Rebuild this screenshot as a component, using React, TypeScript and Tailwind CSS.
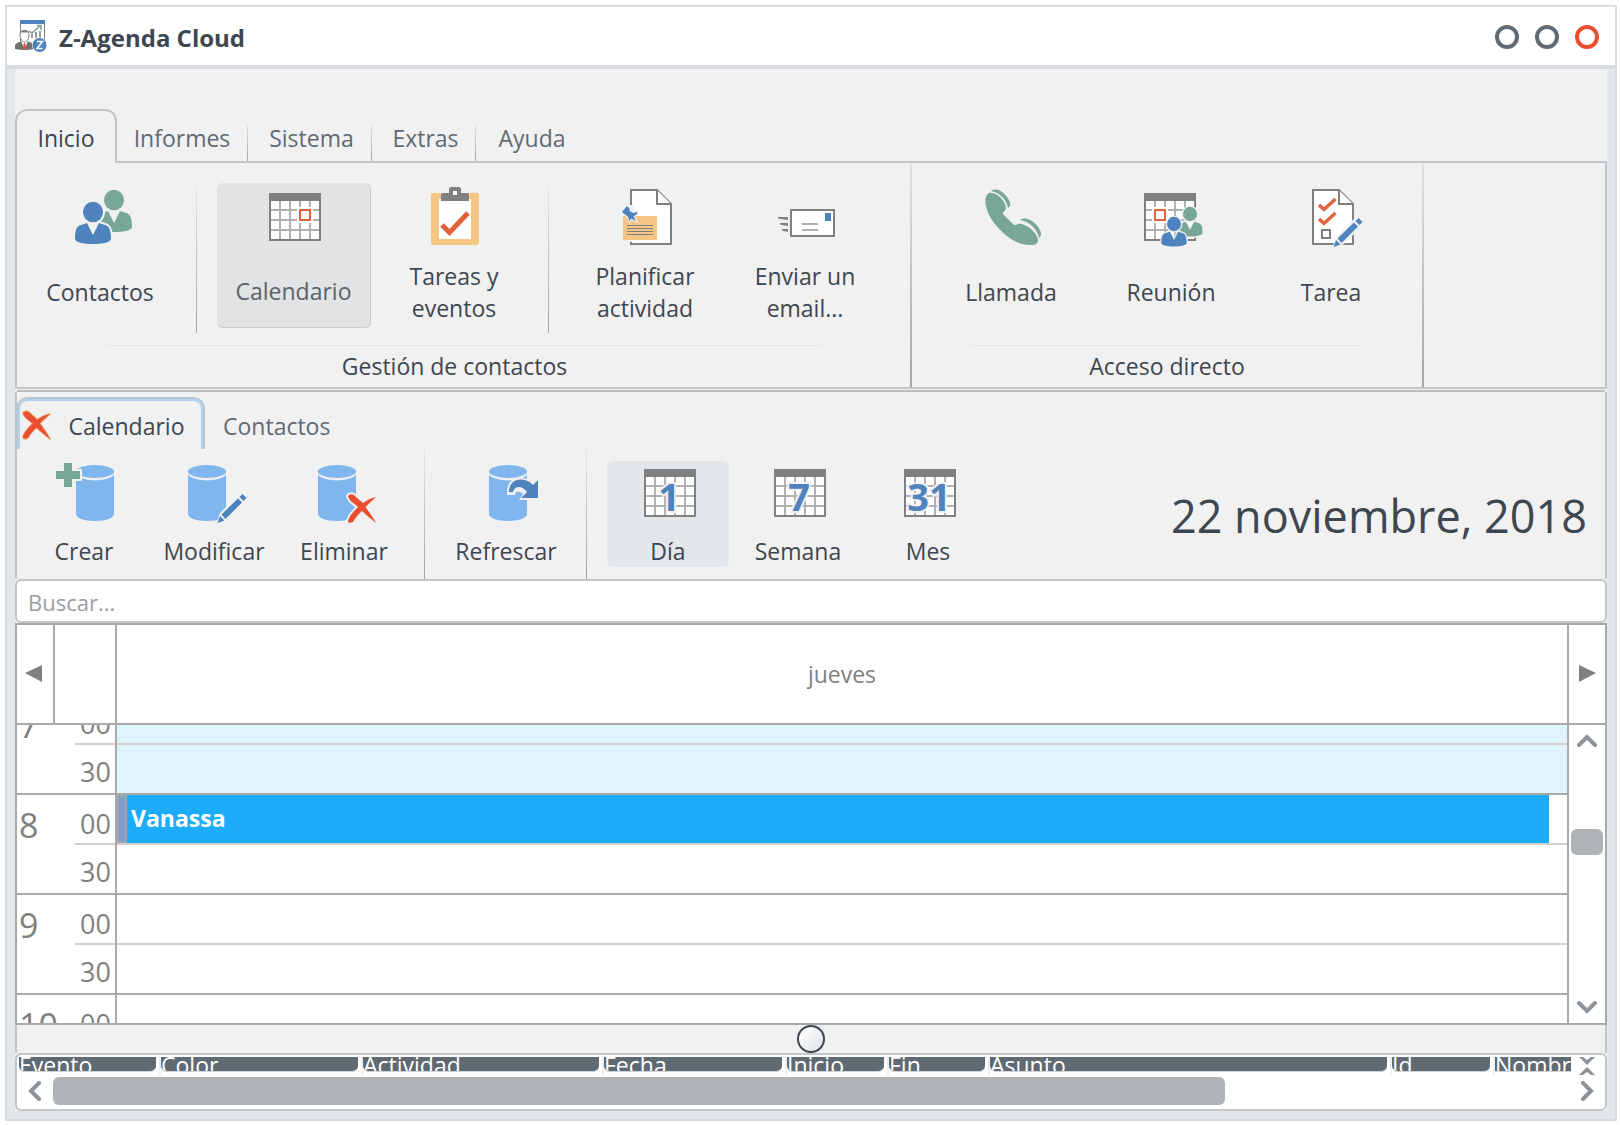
import { ReactNode } from "react";
import clsx from "clsx";

const GRAY = "#808080";
const LIGHT = "#b1b1b1";
const BLUE = "#4e83bd";
const GREEN = "#78a797";
const ORANGE = "#e0633d";
const RED = "#e94e31";
const HALO = "#f1f1f1";

const HORAS = [
  { hora: 7, media: true },
  { hora: 8, media: true },
  { hora: 9, media: true },
  { hora: 10, media: false },
];

const COLUMNAS = [
  { titulo: "Evento", ancho: "w-[142px]" },
  { titulo: "Color", ancho: "w-[202px]" },
  { titulo: "Actividad", ancho: "w-[241px]" },
  { titulo: "Fecha", ancho: "w-[183px]" },
  { titulo: "Inicio", ancho: "w-[102px]" },
  { titulo: "Fin", ancho: "w-[101px]" },
  { titulo: "Asunto", ancho: "w-[402px]" },
  { titulo: "Id", ancho: "w-[103px]" },
  { titulo: "Nombre", ancho: "" },
];

function Svg({ children }: { children: ReactNode }) {
  return (
    <svg viewBox="0 0 64 64" className="w-16 h-16 shrink-0" aria-hidden="true">
      {children}
    </svg>
  );
}

function Rejilla({ x }: { x: number }) {
  return (
    <g transform={`translate(${x} 8)`} shapeRendering="crispEdges">
      <rect width="52" height="48" fill={GRAY} />
      <rect x="2" y="8" width="48" height="38" fill="#fff" />
      <path d="M11 8v38M21 8v38M31 8v38M41 8v38M2 17h48M2 27h48M2 37h48" stroke={LIGHT} strokeWidth="2" />
    </g>
  );
}

function Persona({ x, y, s = 1, color }: { x: number; y: number; s?: number; color: string }) {
  const cuerpo = "M-12 13C-17 14-18 20-18 27c0 3 8 5 18 5s18-2 18-5c0-7-1-13-6-14l-6-2-6 12-6-12z";
  return (
    <g transform={`translate(${x} ${y}) scale(${s})`}>
      <g fill={HALO} stroke={HALO} strokeWidth="4" strokeLinejoin="round">
        <ellipse rx="10" ry="10.3" />
        <path d={cuerpo} />
      </g>
      <g fill={color}>
        <ellipse rx="10" ry="10.3" />
        <path d={cuerpo} />
      </g>
    </g>
  );
}

function Pagina({ x }: { x: number }) {
  return (
    <g transform={`translate(${x} 4)`} fill="#fff" stroke={GRAY} strokeWidth="2">
      <path d="M1 1h26l14 14v40H1z" />
      <path d="M27 1v14h14" />
    </g>
  );
}

function Lapiz() {
  return (
    <g>
      <path d="M33 64l4-12L58 31l8 7-21 21z" fill={HALO} />
      <path d="M34.500 62l2.500-7 4.500 4.500zM38.500 53.500L55 37.500l4 4L42.500 58zM56.500 36l3-3 4 4-3 3z" fill={BLUE} />
    </g>
  );
}

function Cilindro({ x }: { x: number }) {
  return (
    <g transform={`translate(${x} 4)`} fill="#80b6ee">
      <path d="M0 6v43c0 4 8 7 19 7s19-3 19-7V6z" />
      <ellipse cx="19" cy="7" rx="20" ry="8.500" fill={HALO} />
      <ellipse cx="19" cy="6.500" rx="19" ry="6.500" />
    </g>
  );
}

function Numero({ children }: { children: string }) {
  return (
    <Svg>
      <Rejilla x={7} />
      <text x="32" y="50" textAnchor="middle" fill={BLUE} stroke={HALO} strokeWidth="4" paintOrder="stroke" className="text-[38px] font-bold">
        {children}
      </text>
    </Svg>
  );
}

function Aspa({ halo }: { halo?: boolean }) {
  const d = "M0 2C2-1 6 0 8 3L15 9C19 6 23 4 28 3 24 7 20 10 17.500 13 21 18 25 23 28 29 23 25 18 21 14 17 10 21 7 24 5 28 3 29 1 29 0 28 0 23 6 17 10 13 7 10 1 7 0 2z";
  return <path d={d} fill={RED} stroke={halo ? HALO : "#ecc089"} strokeWidth={halo ? 4 : 2} strokeLinejoin="round" paintOrder="stroke" />;
}

const iconos = {
  contactos: (
    <Svg>
      <Persona x={46} y={15} color={GREEN} />
      <Persona x={25} y={27} color={BLUE} />
    </Svg>
  ),
  calendario: (
    <Svg>
      <Rejilla x={7} />
      <rect x="35" y="22" width="16" height="16" fill="#fff" />
      <rect x="38" y="25" width="10" height="10" fill="#fff" stroke={ORANGE} strokeWidth="2" />
    </Svg>
  ),
  tareas: (
    <Svg>
      <rect x="9" y="8" width="48" height="52" rx="2" fill="#f6c685" />
      <path d="M17 14h32v40H17z" fill="#fff" />
      <path d="M19 16V10q0-2 2-2h6V4q0-2 2-2h8q2 0 2 2v4h6q2 0 2 2v6z" fill={GRAY} />
      <path d="M31 6h4v4h-4z" fill="#fff" />
      <path d="M20 40l7.500 7.500L46 28" fill="none" stroke={ORANGE} strokeWidth="5" />
    </Svg>
  ),
  planificar: (
    <Svg>
      <Pagina x={17} />
      <path d="M8 20h13v9h-4v28H8z" fill={HALO} />
      <path d="M17 55h3v2h-3z" fill={HALO} />
      <path d="M10 31h34v24H10z" fill="#f6c685" />
      <path d="M14 40.500h26M14 43.500h26M14 46.500h26M14 49.500h26" stroke={GRAY} strokeWidth="1" />
      <path
        d="M9 27l5-6 2.500 2.500V26l3.500 2 4-1 .5 1.500-4 3 2.500 4.500-5-2.500-1.500 3-1.500-5-3-2z"
        fill={BLUE}
        stroke={HALO}
        strokeWidth="2"
        paintOrder="stroke"
      />
    </Svg>
  ),
  email: (
    <Svg>
      <rect x="18" y="25" width="43" height="26" fill="#fff" stroke={GRAY} strokeWidth="2" />
      <path d="M52 28h6v8h-6z" fill={BLUE} />
      <path d="M29 39h16M29 45h16" stroke={LIGHT} strokeWidth="2" />
      <path d="M5 32h10v3l-10-1.500zM7 38h8v3l-8-1.500zM9 44h6v3l-6-1.500z" fill={GRAY} />
    </Svg>
  ),
  llamada: (
    <Svg>
      <g fill={GREEN}>
        <path d="M10 8C5 11 6 19 8 25c3 10 14 22 24 29 8 5 15 6 21 6 3 0 5-1 6-4 1-7-13-19-20-17-2 1-3 2-5 0L24 29c-1-2 3-3 3-6C27 16 17 6 10 8z" />
        <path d="M12 6c3-2 7-2 11 1 6 4 9 11 8 14l-2 2C28 15 20 7 12 6z" />
        <path d="M41 35c2-2 6-2 10 0 6 3 11 9 11 14 0 2-1 3-2 4C59 45 50 36 41 35z" />
      </g>
    </Svg>
  ),
  reunion: (
    <Svg>
      <Rejilla x={5} />
      <path d="M13 22h16v16H13z" fill="#fff" />
      <rect x="16" y="25" width="10" height="10" fill="#fff" stroke={ORANGE} strokeWidth="2" />
      <Persona x={51} y={29} s={0.7} color={GREEN} />
      <Persona x={35} y={39} s={0.7} color={BLUE} />
    </Svg>
  ),
  tarea: (
    <Svg>
      <Pagina x={13} />
      <path d="M20 20l5 4.500L36.500 14M20 34l5 4.500L36.500 28" fill="none" stroke={ORANGE} strokeWidth="3.500" />
      <rect x="23" y="45" width="8" height="8" fill="none" stroke={GRAY} strokeWidth="2" />
      <Lapiz />
    </Svg>
  ),
  crear: (
    <Svg>
      <Cilindro x={23} />
      <path d="M9 0h12v8h8v12h-8v8H9v-8H1V8h8z" fill={HALO} />
      <path d="M11 2h8v8h8v8h-8v8h-8v-8H3v-8h8z" fill={GREEN} />
    </Svg>
  ),
  modificar: (
    <Svg>
      <Cilindro x={5} />
      <Lapiz />
    </Svg>
  ),
  eliminar: (
    <Svg>
      <Cilindro x={5} />
      <g transform="translate(35 33)">
        <Aspa halo />
      </g>
    </Svg>
  ),
  refrescar: (
    <Svg>
      <Cilindro x={14} />
      <path d="M32 34V30C33 15 48 14 57 21l6-6v24H44l4-6c-4-4-8-3-8 1z" fill={HALO} />
      <path d="M34 31C34 17 49 15 58 24l5-5v18H46l6-6C46 23 39 26 38 31z" fill={BLUE} />
    </Svg>
  ),
};

function Logo() {
  return (
    <svg viewBox="0 0 32 32" className="w-8 h-8 shrink-0" aria-hidden="true">
      <path d="M5 0h25v24H5z" fill={GRAY} />
      <path d="M6 4h23v20H6z" fill="#fff" />
      <path d="M5 0h25v4H5z" fill={BLUE} />
      <path d="M17 18v-4M21 18v-6M25 18v-7" stroke="#9a9a9a" strokeWidth="2" />
      <path d="M14 11l3 2 8-7M21.500 5.500h4.500V10" fill="none" stroke={GREEN} strokeWidth="1.500" />
      <path d="M0 29v-4l2-2 5-2h5l5 2 2 2v4q-9 2-19 0z" fill="#707070" />
      <path d="M6 21l3.500 8 3.500-8z" fill="#fff" />
      <path d="M5 14.500c0-3 2-4 4.500-4s4.500 1 4.500 4c0 4-2 7.500-4.500 7.500S5 18.500 5 14.500z" fill="#fff" stroke={GRAY} />
      <path d="M4.500 14.500c0-6 10-6 10 0l-1-2c-3 0-5 0-8 0z" fill={GRAY} />
      <path d="M8.800 23h1.400l.8 6h-3z" fill={RED} />
      <circle cx="24.500" cy="25" r="7.500" fill="#fff" />
      <circle cx="24.500" cy="25" r="7" fill={BLUE} />
      <path d="M22 21.500h5.500l-5.500 7h5.500" fill="none" stroke="#fff" strokeWidth="1.500" />
    </svg>
  );
}

function BotonGrande({ icono, texto, activo }: { icono: ReactNode; texto: string; activo?: boolean }) {
  return (
    <button
      className={clsx(
        "w-[154px] h-[145px] flex flex-col items-center rounded-md leading-8",
        activo && "bg-[#e1e3e5] border-r border-b border-[#c8cbce] text-[#5b6269]"
      )}
    >
      <span className="pt-0.5">{icono}</span>
      <span className="h-[75px] mt-1.5 px-4 flex items-center">{texto}</span>
    </button>
  );
}

function BotonBarra({ icono, texto, activo }: { icono: ReactNode; texto: string; activo?: boolean }) {
  return (
    <button className={clsx("w-[122px] h-[106px] flex flex-col items-center justify-between rounded-md leading-8", activo && "bg-[#e3e7ea]")}>
      <span className="pl-0.5">{icono}</span>
      <span>{texto}</span>
    </button>
  );
}

function Separador({ className }: { className: string }) {
  return <div className={clsx("w-px shrink-0 bg-linear-to-b from-[#e8e9ea] to-[#9da3a8]", className)} />;
}

function Chevron({ d }: { d: string }) {
  return (
    <svg viewBox="0 0 20 20" className="w-5 h-5 shrink-0" fill="none" stroke="#8e9397" strokeWidth="4" strokeLinecap="round" aria-hidden="true">
      <path d={d} />
    </svg>
  );
}

function Cinta() {
  return (
    <>
      <nav className="flex items-end h-[92px] text-[#616a72]">
        <button className="relative z-10 w-[102px] h-[54px] -mb-0.5 pt-0.5 border-2 border-b-0 border-[#c1c6ca] rounded-t-xl bg-[#f1f1f1] text-[#3e4650]">
          Inicio
        </button>
        <button className="w-[130px] h-[52px] pt-1.5">Informes</button>
        <Separador className="h-[38px]" />
        <button className="w-[123px] h-[52px] pl-1 pt-1.5">Sistema</button>
        <Separador className="h-[38px]" />
        <button className="w-[103px] h-[52px] pl-1 pt-1.5">Extras</button>
        <Separador className="h-[38px]" />
        <button className="w-[108px] h-[52px] pl-1 pt-1.5">Ayuda</button>
      </nav>
      <div className="flex h-[228px] shrink-0 border-2 border-[#c1c6ca]">
        <section className="w-[893px] flex flex-col shrink-0">
          <div className="flex pl-1.5 pt-5">
            <BotonGrande icono={iconos.contactos} texto="Contactos" />
            <Separador className="h-[150px] ml-[19px] mr-5" />
            <BotonGrande icono={iconos.calendario} texto="Calendario" activo />
            <div className="w-1.5" />
            <BotonGrande icono={iconos.tareas} texto="Tareas y eventos" />
            <Separador className="h-[150px] ml-[17px] mr-[19px]" />
            <BotonGrande icono={iconos.planificar} texto="Planificar actividad" />
            <div className="w-1.5" />
            <BotonGrande icono={iconos.email} texto="Enviar un email..." />
          </div>
          <div className="mx-[90px] mt-3 h-px shrink-0 bg-[#e3e6e8]" />
          <h2 className="pr-[18px] leading-10 text-center">Gestión de contactos</h2>
        </section>
        <div className="w-0.5 shrink-0 bg-linear-to-b from-[#dfe2e5] to-[#a1a7ac]" />
        <section className="w-[510px] flex flex-col shrink-0">
          <div className="flex gap-1.5 pl-[22px] pt-5 pb-[5px]">
            <BotonGrande icono={iconos.llamada} texto="Llamada" />
            <BotonGrande icono={iconos.reunion} texto="Reunión" />
            <BotonGrande icono={iconos.tarea} texto="Tarea" />
          </div>
          <div className="mx-[60px] mt-3 h-px shrink-0 bg-[#e3e6e8]" />
          <h2 className="leading-10 text-center">Acceso directo</h2>
        </section>
        <div className="w-0.5 shrink-0 bg-linear-to-b from-[#dfe2e5] to-[#a1a7ac]" />
      </div>
      <div className="mt-px mx-0.5 h-0.5 shrink-0 bg-[#bdbdbd]" />
    </>
  );
}

function BarraCalendario() {
  return (
    <div className="pl-0.5 border-x-2 border-[#c1c6ca]">
      <nav className="flex items-end h-[57px] -ml-[3px] text-[#616a72]">
        <div className="w-[189px] h-[52px] rounded-t-xl border-2 border-b-0 border-[#bcc4cb] text-[#3e4650]">
          <div className="h-full pl-0.5 rounded-t-[10px] border-2 border-b-0 border-[#aed2f5] flex items-center">
            <button aria-label="Cerrar pestaña" className="w-[30px] shrink-0">
              <svg viewBox="-1 -1 31 31" className="w-[30px] h-[30px]">
                <Aspa />
              </svg>
            </button>
            <button className="flex-1 pt-0.5 text-center">Calendario</button>
          </div>
        </div>
        <button className="ml-[18px] h-[48px] pt-0.5">Contactos</button>
      </nav>
      <div className="flex h-[130px] items-center pl-1">
        <div className="flex gap-2">
          <BotonBarra icono={iconos.crear} texto="Crear" />
          <BotonBarra icono={iconos.modificar} texto="Modificar" />
          <BotonBarra icono={iconos.eliminar} texto="Eliminar" />
        </div>
        <Separador className="h-full ml-[19px] mr-5" />
        <BotonBarra icono={iconos.refrescar} texto="Refrescar" />
        <Separador className="h-full ml-[19px] mr-5" />
        <div className="flex gap-2">
          <BotonBarra icono={<Numero>1</Numero>} texto="Día" activo />
          <BotonBarra icono={<Numero>7</Numero>} texto="Semana" />
          <BotonBarra icono={<Numero>31</Numero>} texto="Mes" />
        </div>
        <h1 className="ml-auto mr-[18px] pt-1 text-[45px] whitespace-nowrap">22 noviembre, 2018</h1>
      </div>
    </div>
  );
}

function Hora({ hora, media }: { hora: number; media: boolean }) {
  const fondo = hora < 8 ? "bg-[#e0f4fd]" : "bg-white";
  return (
    <div className="flex h-[100px] shrink-0 border-b-2 border-[#a9a9a9] text-[#808080]">
      <div className="w-[58px] shrink-0 pl-0.5 pt-1.5 text-[34px] leading-[48px]">{hora}</div>
      <div className="w-10 shrink-0 text-[27px] text-right">
        <div className="h-[50px] pt-1.5 pr-1 border-b-2 border-[#d0d0d0] leading-[46px]">00</div>
        {media && <div className="h-12 pt-1 pr-1 leading-[46px]">30</div>}
      </div>
      <div className="w-0.5 shrink-0 bg-[#a9a9a9]" />
      <div className={clsx("flex-1", fondo)}>
        <div className="h-[50px] border-b-2 border-[#d0d0d0]">
          {hora === 8 && (
            <button className="flex items-stretch w-full h-full pr-[18px] text-left text-white font-bold">
              <span className="w-2.5 bg-[#7fa0c2] border-2 border-[#9aa5ae]" />
              <span className="flex-1 pl-1 bg-[#1dacf9] leading-[46px]">Vanassa</span>
            </button>
          )}
        </div>
      </div>
    </div>
  );
}

function Calendario() {
  return (
    <section className="flex flex-col flex-1 min-h-0 border-2 border-[#a9a9a9] bg-white">
      <div className="flex h-[100px] shrink-0 border-b-2 border-[#a9a9a9]">
        <button aria-label="Anterior" className="w-9 pr-1 pb-0.5 flex items-center justify-center">
          <svg viewBox="0 0 18 18" className="w-[18px] h-[18px]">
            <path d="M1 9L18 1v17z" fill={GRAY} />
          </svg>
        </button>
        <div className="w-16 border-x-2 border-[#a9a9a9]" />
        <div className="flex-1 flex items-center justify-center text-[#808080]">jueves</div>
        <button aria-label="Siguiente" className="w-[38px] pl-0.5 pb-0.5 border-l-2 border-[#a9a9a9] flex items-center justify-center">
          <svg viewBox="0 0 18 18" className="w-[18px] h-[18px]">
            <path d="M17 9L0 1v17z" fill={GRAY} />
          </svg>
        </button>
      </div>
      <div className="flex flex-1 min-h-0">
        <div className="flex-1 overflow-hidden">
          <div className="-mt-[30px]">
            {HORAS.map((h) => (
              <Hora key={h.hora} hora={h.hora} media={h.media} />
            ))}
          </div>
        </div>
        <div className="w-[38px] border-l-2 border-[#a9a9a9] flex flex-col items-center py-[7px]">
          <button aria-label="Subir">
            <Chevron d="M2 13l8-8 8 8" />
          </button>
          <div className="flex-[76]" />
          <div className="w-8 h-[26px] rounded-md bg-[#adb3b7]" />
          <div className="flex-[138]" />
          <button aria-label="Bajar">
            <Chevron d="M2 7l8 8 8-8" />
          </button>
        </div>
      </div>
    </section>
  );
}

function ListaEventos() {
  return (
    <section className="h-[58px] shrink-0 border-2 border-[#c1c6ca] rounded-md bg-white">
      <div className="flex h-5 pt-0.5 pl-0.5 pr-2.5">
        <div className="flex-1 h-[18px] overflow-hidden">
          <table className="w-full table-fixed">
            <thead>
              <tr>
                {COLUMNAS.map((c, i) => (
                  <th key={c.titulo} scope="col" className={clsx("p-0 font-normal text-left text-white", c.ancho)}>
                    <div className={clsx("h-[18px]", i < COLUMNAS.length - 1 && "pr-[3px] border-r-2 border-[#efefef]")}>
                      <div
                        className={clsx(
                          "h-[15px] overflow-hidden bg-[#5f6a72] leading-[17px] whitespace-nowrap border-b border-[#cfd3d6]",
                          i < COLUMNAS.length - 1 && "rounded-b-md"
                        )}
                      >
                        {c.titulo}
                      </div>
                    </div>
                  </th>
                ))}
              </tr>
            </thead>
          </table>
        </div>
        <svg viewBox="0 0 16 18" className="w-4 h-[18px] ml-2 shrink-0" fill="#8e9397" aria-hidden="true">
          <path d="M0 0h4l4 3 4-3h4L8 8zM0 18h4l4-3 4 3h4l-8-8z" />
        </svg>
      </div>
      <div className="flex items-center h-[30px] pt-0.5 pl-[9px] pr-2">
        <button aria-label="Desplazar a la izquierda">
          <Chevron d="M13 2l-8 8 8 8" />
        </button>
        <div className="flex-1 ml-[7px] mr-1.5">
          <div className="w-[77.2%] h-7 rounded-md bg-[#adb3b7]" />
        </div>
        <button aria-label="Desplazar a la derecha">
          <Chevron d="M6 2l8 8-8 8" />
        </button>
      </div>
    </section>
  );
}

export default function App() {
  return (
    <div className="h-screen pt-[5px] pl-[5px] pr-[3px] pb-1 bg-white font-['Open_Sans','Noto_Sans',sans-serif] text-[23px] text-[#3e4650]">
      <div className="h-full flex flex-col border-2 border-[#d9dbe3]">
        <header className="flex items-center h-[58px] shrink-0 pl-2 pr-4">
          <Logo />
          <span className="ml-3 pt-1 text-2xl font-bold">Z-Agenda Cloud</span>
          <div className="ml-auto pt-0.5 flex gap-4">
            <button aria-label="Minimizar" className="w-6 h-6 rounded-full border-4 border-[#606b74]" />
            <button aria-label="Maximizar" className="w-6 h-6 rounded-full border-4 border-[#606b74]" />
            <button aria-label="Cerrar" className="w-6 h-6 rounded-full border-4 border-[#e94e31]" />
          </div>
        </header>
        <main className="flex-1 min-h-0 px-2 pb-2 border-t-4 border-[#d9dbe2] bg-[#e3e7ea]">
          <div className="h-full flex flex-col bg-[#f1f1f1]">
            <Cinta />
            <BarraCalendario />
            <input
              type="search"
              aria-label="Buscar"
              placeholder="Buscar..."
              className="w-full h-11 shrink-0 pl-[11px] pt-0.5 border-2 border-[#c1c6ca] rounded-md bg-white outline-none text-[22px] placeholder:text-[#9a9ea2]"
            />
            <Calendario />
            <div className="h-7 shrink-0 border-x-2 border-[#c1c6ca] flex items-center justify-center">
              <button aria-label="Redimensionar" className="w-7 h-7 rounded-full border-2 border-[#3e4650] bg-linear-to-br from-white to-[#dfe3e6]" />
            </div>
            <ListaEventos />
          </div>
        </main>
      </div>
    </div>
  );
}
